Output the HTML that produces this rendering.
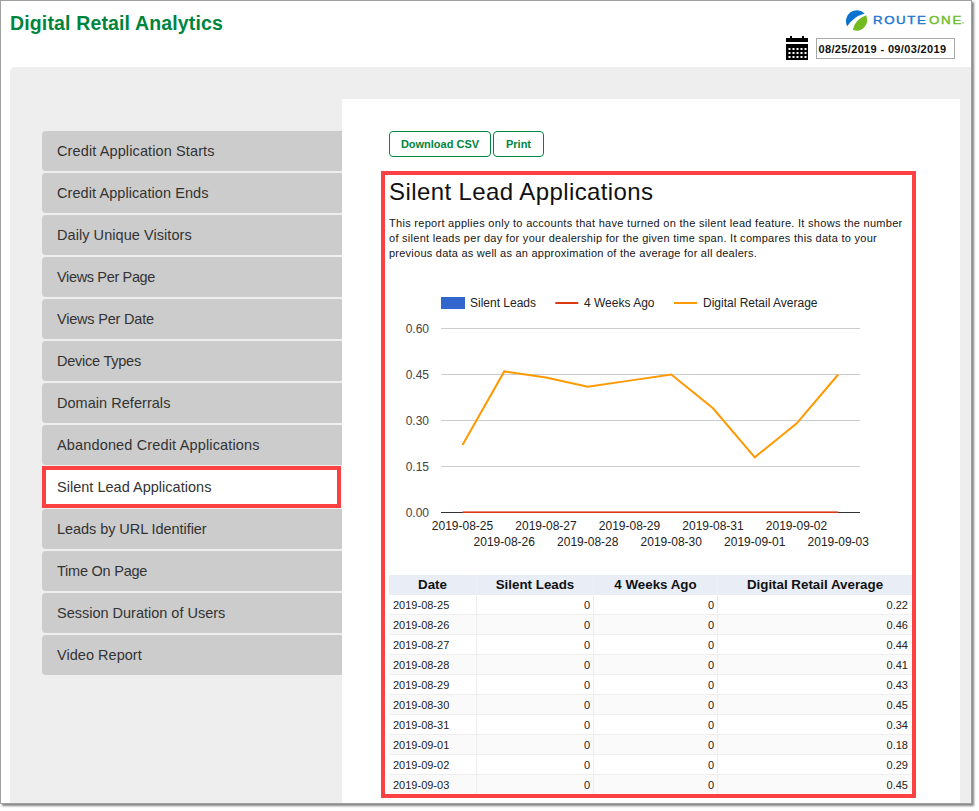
<!DOCTYPE html>
<html>
<head>
<meta charset="utf-8">
<title>Digital Retail Analytics</title>
<style>
*{box-sizing:border-box;margin:0;padding:0}
html,body{width:979px;height:811px;background:#fff;overflow:hidden}
body{font-family:"Liberation Sans",sans-serif;color:#333;position:relative}
#frame{position:absolute;left:0;top:0;width:972px;height:804px;border:1px solid #a0a0a0;background:#fff;box-shadow:2px 2px 2px 0 #858585;overflow:hidden}
#title{position:absolute;left:9px;top:10px;font-size:19.5px;font-weight:bold;color:#00853e;line-height:24px;white-space:nowrap}
#panel{position:absolute;left:9px;top:66px;width:970px;height:760px;background:#eeeeee;border-radius:5px 0 0 0}
#content{position:absolute;left:341px;top:98px;width:618px;height:720px;background:#fff}
.nav{position:absolute;left:41px;width:300px;height:40px;background:#cccccc;border-radius:4px 0 0 4px;font-size:14.5px;line-height:40px;padding-left:15px;color:#333;white-space:nowrap}
.nav.sel{background:#fff;border:4px solid #fb4141;border-radius:0;line-height:34px;padding-left:11px;left:41px;width:299px;height:42px;box-shadow:1px 0 0 #fff}
.btn{position:absolute;top:130px;height:26px;border:1px solid #00853e;border-radius:4px;color:#00853e;font-weight:bold;font-size:11px;line-height:24px;text-align:center;background:#fff;white-space:nowrap}
#redbox{position:absolute;left:380px;top:170px;width:535px;height:627px;border:4px solid #fb4141}
#h1{position:absolute;left:388px;top:176px;font-size:24px;line-height:30px;color:#111;white-space:nowrap}
#desc{position:absolute;left:388px;top:215px;width:530px;font-size:11px;line-height:15px;color:#151515}
#desc div{white-space:nowrap}
#dateinput{position:absolute;left:815px;top:37px;width:139px;height:21px;border:1px solid #a9a9a9;background:#fff;font-size:11px;font-weight:bold;color:#111;line-height:21px;padding-left:1.5px;white-space:nowrap}
#lr,#lo{position:absolute;top:11.3px;font-size:11.3px;line-height:16px;font-weight:normal;white-space:nowrap;-webkit-text-stroke:0.4px currentColor;transform:scaleX(1.18);transform-origin:0 0}
#lr{left:872px;color:#1a76d2}
#lo{left:928px;color:#6fbe2c}
/*FIT_START*/
#title{letter-spacing:0.147px}
#n1{letter-spacing:0.115px}
#n2{letter-spacing:0.072px}
#n3{letter-spacing:0.059px}
#n4{letter-spacing:-0.347px}
#n5{letter-spacing:-0.198px}
#n6{letter-spacing:-0.235px}
#n7{letter-spacing:0.038px}
#n8{letter-spacing:0.150px}
#n9{letter-spacing:0.018px}
#n10{letter-spacing:-0.059px}
#n11{letter-spacing:-0.232px}
#n12{letter-spacing:-0.006px}
#n13{letter-spacing:0.030px}
#h1{letter-spacing:0.402px}
#d1{letter-spacing:0.290px}
#d2{letter-spacing:0.282px}
#d3{letter-spacing:0.241px}
#dateinput{letter-spacing:0.350px}
#lr{letter-spacing:1.321px}
#lo{letter-spacing:1.444px}
/*FIT_END*/
table{position:absolute;left:388px;top:574px;width:523px;border-collapse:separate;border-spacing:0;table-layout:fixed;font-size:11px;color:#222}
th{height:20px;background:#e8edf6;font-size:13.35px;font-weight:bold;color:#111;text-align:center;padding:0;border-right:1px solid #eef1f8;border-bottom:1px solid #e9ecf2;line-height:18px;padding-top:1px;vertical-align:top}
td{height:20px;border-right:1px solid #eee;border-bottom:1px solid #eee;text-align:right;padding:0 3px 0 0;white-space:nowrap;line-height:17px;padding-top:2px}
td:first-child{text-align:left;padding-left:4px}
td:last-child,th:last-child{border-right:0;padding-right:4px}
th:last-child{padding-right:0}
tr:nth-child(odd) td{background:#fafafa}
svg{position:absolute}
</style>
</head>
<body>
<div id="frame">
  <div id="title">Digital Retail Analytics</div>

  <!-- logo -->
  <svg style="left:843px;top:7px" width="26" height="26" viewBox="844 8 26 26">
    <path d="M847.2 26.3 A11 11 0 0 1 864.7 13.4 Q853.3 16.6 847.2 26.3 Z" fill="#0b72d0"/>
    <path d="M866 15.2 A10.5 10.5 0 0 1 852.9 29.8 Q854.3 20 866 15.2 Z" fill="#72ba20"/>
  </svg>
  <div id="lr">ROUTE</div><div id="lo">ONE</div><div style="position:absolute;left:961px;top:21px;width:2px;height:2px;border-radius:1px;background:#b5dc8c"></div>

  <!-- calendar -->
  <svg style="left:785px;top:35px" width="22" height="24" viewBox="0 0 22 24">
    <rect x="4" y="0" width="2" height="4" fill="#000"/>
    <rect x="16" y="0" width="2" height="4" fill="#000"/>
    <rect x="0" y="2" width="22" height="4" fill="#000"/>
    <rect x="0" y="8" width="22" height="16" fill="#000"/>
    <g fill="#fff">
      <rect x="2.5" y="12" width="2" height="2"/><rect x="6.5" y="12" width="2" height="2"/><rect x="10.5" y="12" width="2" height="2"/><rect x="14.5" y="12" width="2" height="2"/><rect x="18.5" y="12" width="2" height="2"/>
      <rect x="2.5" y="16" width="2" height="2"/><rect x="6.5" y="16" width="2" height="2"/><rect x="10.5" y="16" width="2" height="2"/><rect x="14.5" y="16" width="2" height="2"/><rect x="18.5" y="16" width="2" height="2"/>
      <rect x="2.5" y="20" width="2" height="2"/><rect x="6.5" y="20" width="2" height="2"/><rect x="10.5" y="20" width="2" height="2"/><rect x="14.5" y="20" width="2" height="2"/><rect x="18.5" y="20" width="2" height="2"/>
    </g>
  </svg>
  <div id="dateinput">08/25/2019 - 09/03/2019</div>

  <div id="panel"></div>
  <div id="content"></div>

  <div id="n1" class="nav" style="top:130px">Credit Application Starts</div>
  <div id="n2" class="nav" style="top:172px">Credit Application Ends</div>
  <div id="n3" class="nav" style="top:214px">Daily Unique Visitors</div>
  <div id="n4" class="nav" style="top:256px">Views Per Page</div>
  <div id="n5" class="nav" style="top:298px">Views Per Date</div>
  <div id="n6" class="nav" style="top:340px">Device Types</div>
  <div id="n7" class="nav" style="top:382px">Domain Referrals</div>
  <div id="n8" class="nav" style="top:424px">Abandoned Credit Applications</div>
  <div id="n9" class="nav sel" style="top:465px">Silent Lead Applications</div>
  <div id="n10" class="nav" style="top:508px">Leads by URL Identifier</div>
  <div id="n11" class="nav" style="top:550px">Time On Page</div>
  <div id="n12" class="nav" style="top:592px">Session Duration of Users</div>
  <div id="n13" class="nav" style="top:634px">Video Report</div>

  <div class="btn" style="left:388px;width:102px">Download CSV</div>
  <div class="btn" style="left:492px;width:51px">Print</div>

  <div id="h1">Silent Lead Applications</div>
  <div id="desc">
    <div id="d1">This report applies only to accounts that have turned on the silent lead feature. It shows the number</div>
    <div id="d2">of silent leads per day for your dealership for the given time span. It compares this data to your</div>
    <div id="d3">previous data as well as an approximation of the average for all dealers.</div>
  </div>

  <!-- CHART_START -->
  <svg style="left:388px;top:284px" width="523" height="280" viewBox="389 285 523 280" font-family="Liberation Sans, sans-serif" font-size="12">
  <rect x="441" y="297" width="24" height="12" fill="#3366cc"/>
  <text x="470" y="307" fill="#222">Silent Leads</text>
  <rect x="555.3" y="302" width="23" height="2" fill="#dc3912"/>
  <text x="584" y="307" fill="#222">4 Weeks Ago</text>
  <rect x="674" y="302" width="23" height="2" fill="#ff9900"/>
  <text x="703" y="307" fill="#222">Digital Retail Average</text>
  <rect x="441" y="328" width="419" height="1" fill="#ccc"/>
  <text x="429" y="332.7" text-anchor="end" fill="#444">0.60</text>
  <rect x="441" y="374" width="419" height="1" fill="#ccc"/>
  <text x="429" y="378.7" text-anchor="end" fill="#444">0.45</text>
  <rect x="441" y="420" width="419" height="1" fill="#ccc"/>
  <text x="429" y="424.7" text-anchor="end" fill="#444">0.30</text>
  <rect x="441" y="466" width="419" height="1" fill="#ccc"/>
  <text x="429" y="470.7" text-anchor="end" fill="#444">0.15</text>
  <rect x="441" y="512" width="419" height="1" fill="#333"/>
  <text x="429" y="516.7" text-anchor="end" fill="#444">0.00</text>
  <rect x="462.50" y="511.4" width="375.75" height="1.6" fill="#dc3912"/>
  <path d="M462.50 445.03 L504.25 371.43 L546.00 377.57 L587.75 386.77 L629.50 380.63 L671.25 374.50 L713.00 408.23 L754.75 457.30 L796.50 423.57 L838.25 374.50" stroke="#ff9900" stroke-width="2" fill="none"/>
  <text x="462.50" y="530" text-anchor="middle" fill="#222">2019-08-25</text>
  <text x="504.25" y="546" text-anchor="middle" fill="#222">2019-08-26</text>
  <text x="546.00" y="530" text-anchor="middle" fill="#222">2019-08-27</text>
  <text x="587.75" y="546" text-anchor="middle" fill="#222">2019-08-28</text>
  <text x="629.50" y="530" text-anchor="middle" fill="#222">2019-08-29</text>
  <text x="671.25" y="546" text-anchor="middle" fill="#222">2019-08-30</text>
  <text x="713.00" y="530" text-anchor="middle" fill="#222">2019-08-31</text>
  <text x="754.75" y="546" text-anchor="middle" fill="#222">2019-09-01</text>
  <text x="796.50" y="530" text-anchor="middle" fill="#222">2019-09-02</text>
  <text x="838.25" y="546" text-anchor="middle" fill="#222">2019-09-03</text>
  </svg>
  <!-- CHART_END -->

  <table>
    <colgroup><col style="width:88px"><col style="width:117px"><col style="width:124px"><col style="width:194px"></colgroup>
    <tr><th>Date</th><th>Silent Leads</th><th>4 Weeks Ago</th><th>Digital Retail Average</th></tr>
    <tr><td>2019-08-25</td><td>0</td><td>0</td><td>0.22</td></tr>
    <tr><td>2019-08-26</td><td>0</td><td>0</td><td>0.46</td></tr>
    <tr><td>2019-08-27</td><td>0</td><td>0</td><td>0.44</td></tr>
    <tr><td>2019-08-28</td><td>0</td><td>0</td><td>0.41</td></tr>
    <tr><td>2019-08-29</td><td>0</td><td>0</td><td>0.43</td></tr>
    <tr><td>2019-08-30</td><td>0</td><td>0</td><td>0.45</td></tr>
    <tr><td>2019-08-31</td><td>0</td><td>0</td><td>0.34</td></tr>
    <tr><td>2019-09-01</td><td>0</td><td>0</td><td>0.18</td></tr>
    <tr><td>2019-09-02</td><td>0</td><td>0</td><td>0.29</td></tr>
    <tr><td>2019-09-03</td><td>0</td><td>0</td><td>0.45</td></tr>
  </table>

  <div id="redbox"></div>
</div>
</body>
</html>
